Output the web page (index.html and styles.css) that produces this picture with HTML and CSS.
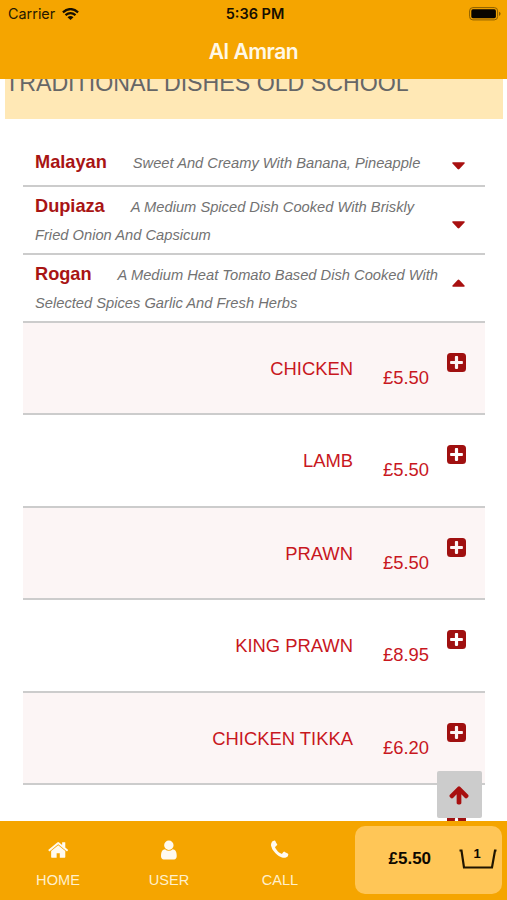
FILE: index.html
```
<!DOCTYPE html>
<html lang="en">
<head>
<meta charset="utf-8">
<title>Al Amran</title>
<link rel="stylesheet" href="styles.css">
</head>
<body>
<svg width="0" height="0" class="defs">
  <symbol id="plus" viewBox="0 0 19 19"><path fill-rule="evenodd" d="M3.500 0h12a3.500 3.500 0 0 1 3.500 3.500v12a3.500 3.500 0 0 1-3.500 3.500h-12A3.500 3.500 0 0 1 0 15.500v-12A3.500 3.500 0 0 1 3.500 0zM8.700 3.100q-.8 0-.8.800v4H3.900q-.8 0-.8.800v1.600q0 .8.800.8h4v4q0 .8.800.8h1.600q.8 0 .8-.8v-4h4q.8 0 .8-.8V8.700q0-.8-.8-.8h-4V3.900q0-.8-.8-.8z"/></symbol>
  <symbol id="caret" viewBox="0 0 13 8"><path d="M.8.300h11.400q.9.500.3 1.200L7.400 7q-.9.800-1.800 0L.5 1.500Q-.1.800.8.300z"/></symbol>
</svg>
<div class="app">
  <header class="top">
    <div class="status">
      <div class="carrier">Carrier
        <svg class="wifi" viewBox="0 0 17 12"><g fill="none" stroke="#160f00" stroke-width="2.300"><path d="M.9 4.300Q8.500-2.100 16.100 4.300"/><path d="M3.500 7.200q5-4.200 10 0"/></g><path fill="#160f00" d="M5.500 9.200q3-2.300 6 0l-3 2.800z"/></svg>
      </div>
      <div class="time">5:36 PM</div>
      <svg class="battery" viewBox="0 0 32 14"><rect x=".6" y=".6" width="28" height="12.300" rx="3.300" fill="none" stroke="#8a5e00" stroke-width="1"/><rect x="2.300" y="2.300" width="24.600" height="8.900" rx="1.600" fill="#080500"/><path d="M30 4.700q1.600.7 1.600 2.100T30 8.900z" fill="#8a5e00"/></svg>
    </div>
    <h1 class="title">Al Amran</h1>
  </header>
  <main class="content">
    <h2 class="band"><span>TRADITIONAL DISHES OLD SCHOOL</span></h2>
    <section class="menu">
      <div class="dish"><p><b>Malayan</b><i>Sweet And Creamy With Banana, Pineapple</i></p><svg class="caret c1"><use href="#caret"/></svg></div>
      <div class="dish"><p><b>Dupiaza</b><i>A Medium Spiced Dish Cooked With Briskly<br>Fried Onion And Capsicum</i></p><svg class="caret c2"><use href="#caret"/></svg></div>
      <div class="dish"><p><b>Rogan</b><i>A Medium Heat Tomato Based Dish Cooked With<br>Selected Spices Garlic And Fresh Herbs</i></p><svg class="caret c3"><use href="#caret"/></svg></div>
      <div class="item"><span class="name">CHICKEN</span><span class="price">£5.50</span><svg class="plus"><use href="#plus"/></svg></div>
      <div class="item"><span class="name">LAMB</span><span class="price">£5.50</span><svg class="plus"><use href="#plus"/></svg></div>
      <div class="item"><span class="name">PRAWN</span><span class="price">£5.50</span><svg class="plus"><use href="#plus"/></svg></div>
      <div class="item"><span class="name">KING PRAWN</span><span class="price">£8.95</span><svg class="plus"><use href="#plus"/></svg></div>
      <div class="item"><span class="name">CHICKEN TIKKA</span><span class="price">£6.20</span><svg class="plus"><use href="#plus"/></svg></div>
      <div class="item last"><span class="name"></span><span class="price"></span><svg class="plus"><use href="#plus"/></svg></div>
    </section>
    <div class="to-top"><svg viewBox="0 0 1792 1792"><path d="M1675 971q0 51-37 90l-75 75q-38 38-91 38-54 0-90-38l-294-293v704q0 52-37.500 84.500t-90.500 32.500h-128q-53 0-90.500-32.500t-37.500-84.500v-704l-294 293q-36 38-90 38t-90-38l-75-75q-38-38-38-90 0-53 38-91l651-651q35-37 90-37 54 0 91 37l651 651q37 39 37 91z"/></svg></div>
  </main>
  <nav class="bar">
    <div class="tab"><svg viewBox="0 0 1664 1792"><path d="M1408 992v480q0 26-19 45t-45 19h-384v-384h-256v384h-384q-26 0-45-19t-19-45v-480q0-1 .5-3t.5-3l575-474 575 474q1 2 1 6zm223-69l-62 74q-8 9-21 11h-3q-13 0-21-7l-692-577-692 577q-12 8-24 7-13-2-21-11l-62-74q-8-10-7-23.500t11-21.500l719-599q32-26 76-26t76 26l244 204v-195q0-14 9-23t23-9h192q14 0 23 9t9 23v408l219 182q10 8 11 21.500t-7 23.500z"/></svg><span>HOME</span></div>
    <div class="tab"><svg viewBox="256 0 1280 1792"><path d="M1536 1399q0 109-62.500 187t-150.500 78h-854q-88 0-150.500-78t-62.500-187q0-85 8.500-160.500t31.500-152 58.500-131 94-89 134.500-34.500q131 128 313 128t313-128q76 0 134.500 34.500t94 89 58.500 131 31.500 152 8.500 160.500zm-256-887q0 159-112.500 271.500t-271.500 112.500-271.500-112.500-112.500-271.500 112.500-271.500 271.500-112.500 271.500 112.500 112.500 271.500z"/></svg><span>USER</span></div>
    <div class="tab"><svg viewBox="192 0 1408 1792"><path d="M1600 1240q0 27-10 70.500t-21 68.500q-21 50-122 106-94 51-186 51-27 0-53-3.500t-57.500-12.500-47-14.500-55.500-20.500-49-18q-98-35-175-83-127-79-264-216t-216-264q-48-77-83-175-3-9-18-49t-20.500-55.500-14.500-47-12.500-57.500-3.500-53q0-92 51-186 56-101 106-122 25-11 68.500-21t70.500-10q14 0 21 3 18 6 53 76 11 19 30 54t35 63.500 31 53.500q3 4 17.500 25t21.500 35.500 7 28.500q0 20-28.500 50t-62 55-62 53-28.500 46q0 9 5 22.500t8.500 20.500 14 24 11.500 19q76 137 174 235t235 174q2 1 19 11.500t24 14 20.500 8.500 22.500 5q18 0 46-28.500t53-62 55-62 50-28.500q14 0 28.500 7t35.500 21.500 25 17.500q25 15 53.500 31t63.500 35 54 30q70 35 76 53 3 7 3 21z"/></svg><span>CALL</span></div>
    <div class="basket"><span class="total">£5.50</span><div class="cart"><svg viewBox="0 0 38 22"><path d="M.5 2.500h2L5 19.500h28L36 2.500h1.500" fill="none" stroke="#201500" stroke-width="2.200"/></svg><span class="count">1</span></div></div>
  </nav>
</div>
</body>
</html>
```
FILE: styles.css
```
* { box-sizing: border-box; }
body { margin: 0; background: #fff; font-family: "Liberation Sans", Arial, sans-serif; }
.defs { position: absolute; }
.app { width: 507px; height: 900px; display: flex; flex-direction: column; overflow: hidden; }
.top { flex: none; height: 79px; background: #f5a500; }
.status { display: grid; grid-template-columns: 1fr auto 1fr; align-items: center; height: 27px; padding: 0 6px 0 8px; font: 14.4px/27px Inter, sans-serif; color: #251900; }
.carrier { display: flex; align-items: center; gap: 7px; }
.wifi { width: 17px; height: 12px; }
.time { font-weight: 600; font-size: 14.5px; color: #160f00; padding-left: 1px; }
.battery { width: 32px; height: 14px; justify-self: end; }
.title { margin: 0; padding-top: 12px; text-align: center; font: 600 21px/26px Inter, sans-serif; color: #fff8e6; letter-spacing: -.5px; }
.content { flex: none; height: 742px; overflow: hidden; position: relative; }
.band { margin: 0 4px 0 5px; height: 40px; background: #ffe8b5; font-weight: 400; font-size: 23.200px; line-height: 26px; color: #666; overflow: hidden; }
.band span { display: block; margin: -9px 0 0 0; white-space: nowrap; }
.menu { margin: 24px 22px 0 23px; }
.dish { display: flex; justify-content: space-between; height: 68px; padding: 4px 20px 0 12px; border-bottom: 2px solid #ccc; color: #727272; }
.dish:first-child { height: 44px; padding-top: 5px; }
.dish:nth-child(2) { padding-top: 5px; }
.dish:nth-child(3) { padding-top: 5px; }
.dish p { margin: 0; line-height: 28px; white-space: nowrap; }
.dish b { font-size: 18.200px; color: #a81414; margin-right: 26px; }
.dish i { font-size: 14.700px; }
.caret { flex: none; width: 13px; height: 8px; fill: #a81010; }
.c1 { margin-top: 14px; }
.c2 { margin-top: 29px; }
.c3 { margin-top: 19px; transform: rotate(180deg); }
.item { display: grid; grid-template-columns: 330px 76px 1fr; height: 92.450px; border-bottom: 2px solid #ccc; color: #c8171e; font-size: 18.400px; line-height: 22px; text-align: right; }
.item:nth-child(even) { background: #fcf5f5; }
.item .name { padding-top: 35px; }
.item .price { padding-top: 44px; }
.plus { width: 19px; height: 19px; margin: 30px 0 0 18px; fill: #a01010; }
.last { border: 0; }
.to-top { position: absolute; left: 437px; top: 692px; width: 45px; height: 47px; border-radius: 2px; background: #ccc; display: flex; align-items: center; justify-content: center; padding-right: 2px; }
.to-top svg { width: 22px; height: 22px; fill: #a81010; }
.bar { flex: none; height: 79px; background: #f5a500; display: grid; grid-template-columns: 111px 111px 111px 147px; padding-left: 2.500px; }
.tab { display: flex; flex-direction: column; align-items: center; padding-top: 18px; font-size: 14.6px; line-height: 18px; color: #fff0cc; }
.tab svg { height: 22px; fill: #fffaf0; margin-bottom: 10px; }
.basket { width: 147px; height: 68px; margin: 5px 0 0 19.500px; border-radius: 10px; background: #ffc657; display: flex; align-items: center; padding: 0 5px 3px 33.500px; justify-content: space-between; color: #0d0800; font-weight: 700; font-size: 17px; }
.cart { width: 38px; height: 22px; position: relative; }
.cart svg { width: 38px; height: 22px; display: block; }
.count { position: absolute; left: 0; right: 2px; top: -2px; text-align: center; font-size: 13px; line-height: 15px; }
```
